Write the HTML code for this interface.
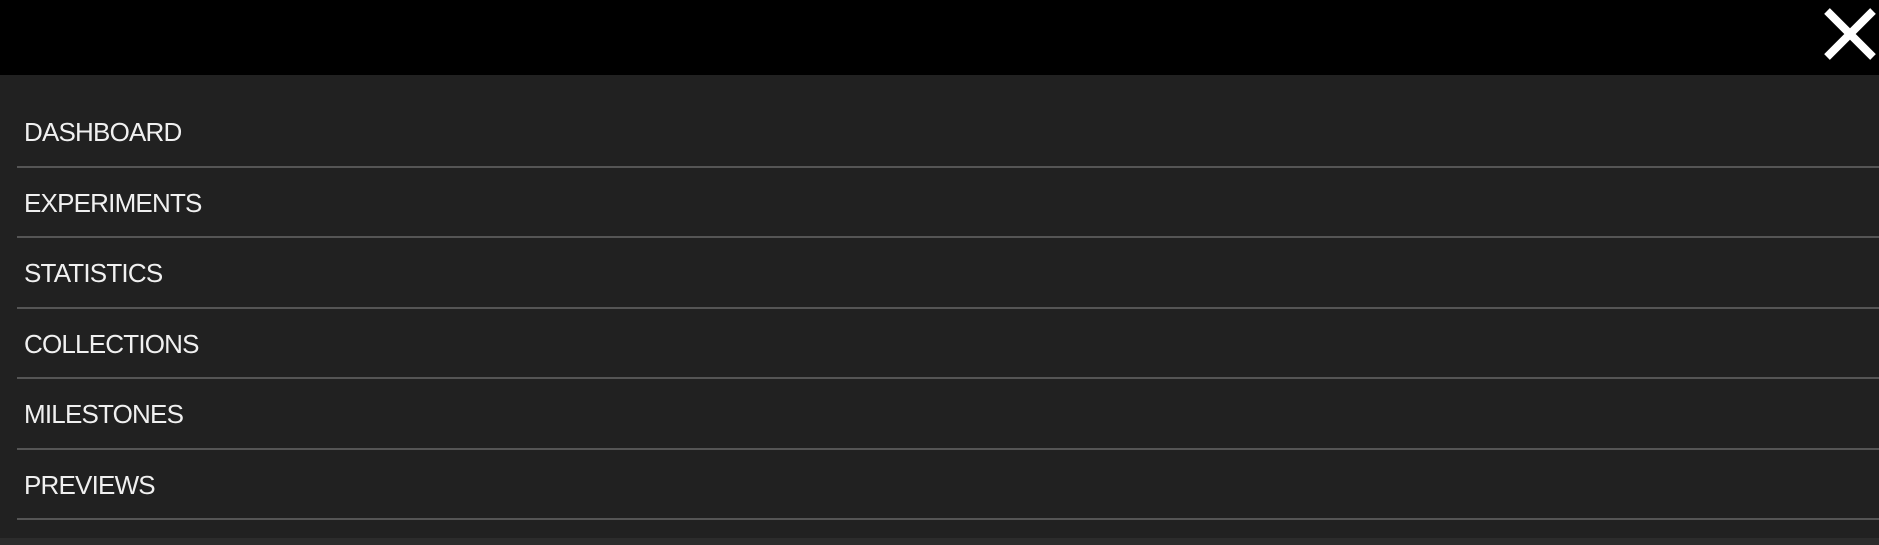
<!DOCTYPE html>
<html><head><style>
body{margin:0;width:1879px;height:545px;background:#212121;overflow:hidden;font-family:"Liberation Sans",sans-serif;position:relative}
.top{position:absolute;left:0;top:0;width:1879px;height:75px;background:#000}
.item{position:absolute;left:24px;font-size:26px;color:#f0f0f0;line-height:26px;letter-spacing:-0.8px}
.line{position:absolute;left:17px;right:0;height:2px;background:#555}
.bot{position:absolute;left:0;top:538px;width:1879px;height:7px;background:#2c2c2c}
</style></head><body>
<div class="top"></div>
<svg style="position:absolute;left:1820px;top:4px" width="60" height="60" viewBox="0 0 60 60"><path d="M7 7L53 53M53 7L7 53" stroke="#fff" stroke-width="8"/></svg>
<div class="item" style="top:119px">DASHBOARD</div>
<div class="line" style="top:166px"></div>
<div class="item" style="top:190px">EXPERIMENTS</div>
<div class="line" style="top:236px"></div>
<div class="item" style="top:260px">STATISTICS</div>
<div class="line" style="top:307px"></div>
<div class="item" style="top:331px">COLLECTIONS</div>
<div class="line" style="top:377px"></div>
<div class="item" style="top:401px">MILESTONES</div>
<div class="line" style="top:448px"></div>
<div class="item" style="top:472px">PREVIEWS</div>
<div class="line" style="top:518px"></div>
<div class="bot"></div>
</body></html>
